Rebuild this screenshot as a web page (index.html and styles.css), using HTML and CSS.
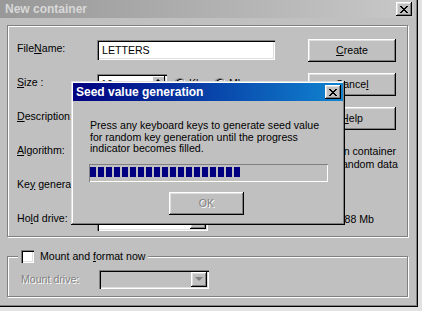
FILE: index.html
```html
<!DOCTYPE html>
<html>
<head>
    <meta charset="UTF-8">
    <title>New container</title>
    <link rel="stylesheet" href="styles.css">
</head>
<body>
    <div class="window">
        <div class="titlebar inactive">
            <span class="title">New container</span>
            <span class="close">
                <svg width="8" height="7" viewBox="0 0 8 7" shape-rendering="crispEdges"><path d="M0 0h2v1H0zM6 0h2v1H6zM1 1h2v1H1zM5 1h2v1H5zM2 2h4v1H2zM3 3h2v1H3zM2 4h4v1H2zM1 5h2v1H1zM5 5h2v1H5zM0 6h2v1H0zM6 6h2v1H6z"/></svg>
            </span>
        </div>

        <div class="client">
            <fieldset class="group main">
                <div class="row">
                    <span class="lbl">File<u>N</u>ame:</span>
                    <span class="field name">LETTERS</span>
                    <span class="btn"><u>C</u>reate</span>
                </div>
                <div class="row">
                    <span class="lbl"><u>S</u>ize :</span>
                    <span class="field spin">10
                        <span class="arrows"><i class="up"></i><i class="down"></i></span>
                    </span>
                    <span class="radio"></span><span class="opt"><u>K</u>b</span>
                    <span class="radio on"></span><span class="opt"><u>M</u>b</span>
                    <span class="btn">Cance<u>l</u></span>
                </div>
                <div class="row">
                    <span class="lbl"><u>D</u>escription:</span>
                    <span class="field desc"></span>
                    <span class="btn"><u>H</u>elp</span>
                </div>
                <div class="row">
                    <span class="lbl"><u>A</u>lgorithm:</span>
                    <span class="field combo algo"><span class="drop"><i></i></span></span>
                    <span class="note">Create hidden container<br>and fill with random data</span>
                </div>
                <div class="row">
                    <span class="lbl">Ke<u>y</u> generator:</span>
                    <span class="field combo algo"><span class="drop"><i></i></span></span>
                </div>
                <div class="row">
                    <span class="lbl">Ho<u>l</u>d drive:</span>
                    <span class="field combo hold"><span class="drop"><i></i></span></span>
                    <span class="free">Free space: 1388 Mb</span>
                </div>
            </fieldset>

            <fieldset class="group mount">
                <legend><span class="check"></span><span>Mount and <u>f</u>ormat now</span></legend>
                <div class="row short">
                    <span class="lbl disabled">Mount drive:</span>
                    <span class="field combo off"><span class="drop"><i></i></span></span>
                </div>
            </fieldset>
        </div>

        <div class="seed">
            <div class="titlebar active">
                <span class="title">Seed value generation</span>
                <span class="close">
                    <svg width="8" height="7" viewBox="0 0 8 7" shape-rendering="crispEdges"><path d="M0 0h2v1H0zM6 0h2v1H6zM1 1h2v1H1zM5 1h2v1H5zM2 2h4v1H2zM3 3h2v1H3zM2 4h4v1H2zM1 5h2v1H1zM5 5h2v1H5zM0 6h2v1H0zM6 6h2v1H6z"/></svg>
                </span>
            </div>
            <div class="seed-body">
                <p class="msg">Press any keyboard keys to generate seed value for random key generation until the progress indicator becomes filled.</p>
                <div class="progress"><div class="fill" style="width: 151px"></div></div>
                <span class="btn ok disabled">OK</span>
            </div>
        </div>
    </div>
</body>
</html>
```

FILE: styles.css
```css
* {
    box-sizing: border-box;
}
body {
    margin: 0;
    background: #e2e2e2;
    font-family: "Liberation Sans", Arial, sans-serif;
    font-size: 10.6px;
    color: #000;
}
u {
    text-decoration-thickness: 1px;
    text-underline-offset: 1px;
}
.window {
    position: relative;
    width: 418px;
    height: 307px;
    padding-right: 4px;
    background: #c0c0c0;
    box-shadow: inset -1px -1px #000, inset -2px -2px #808080;
}

/* title bars */
.titlebar {
    display: flex;
    align-items: center;
    justify-content: space-between;
    height: 18px;
    padding: 0 2px 0 5px;
    font-size: 12px;
    font-weight: bold;
}
.titlebar.inactive {
    background: linear-gradient(to right, #989898, #c8c8c8);
    color: #d8d8d8;
}
.titlebar.active {
    background: linear-gradient(to right, #000080, #1084d0);
    color: #fff;
    padding-left: 3px;
}
.close {
    display: flex;
    align-items: center;
    justify-content: center;
    width: 16px;
    height: 14px;
    background: #c0c0c0;
    box-shadow: inset -1px -1px #000, inset 1px 1px #fff, inset -2px -2px #808080, inset 2px 2px #dfdfdf;
}

.client {
    padding: 7px 0 0 7px;
}

/* group boxes */
.group {
    margin: 0;
    width: 401px;
    border: 1px solid #808080;
    box-shadow: 1px 1px #fff, inset 1px 1px #fff;
}
.main {
    height: 212px;
    padding: 7px 11px 0 9px;
}
.mount {
    margin-top: 12px;
    height: 48px;
    padding: 6px 11px 0 13px;
}
.mount legend {
    display: flex;
    align-items: center;
    height: 14px;
    margin-left: -3px;
    padding: 0 3px;
    background: #c0c0c0;
}

.row {
    display: flex;
    align-items: center;
    height: 34px;
}
.row.short {
    height: 20px;
}
.lbl {
    width: 80px;
    flex: none;
    padding-bottom: 5px;
    white-space: nowrap;
    overflow: hidden;
}
.mount .lbl {
    width: 78px;
    padding-bottom: 0;
}
.disabled {
    color: #808080;
    text-shadow: 1px 1px #fff;
}

/* sunken fields */
.field {
    position: relative;
    display: flex;
    align-items: center;
    height: 20px;
    padding-left: 5px;
    background: #fff;
    box-shadow: inset 1px 1px #808080, inset 2px 2px #000, inset -1px -1px #fff, inset -2px -2px #dfdfdf;
}
.name {
    width: 178px;
}
.desc {
    width: 178px;
}
.spin {
    width: 70px;
    padding-left: 4px;
}
.arrows {
    position: absolute;
    right: 2px;
    top: 2px;
    bottom: 2px;
    width: 13px;
    display: flex;
    flex-direction: column;
}
.arrows i {
    flex: 1;
    position: relative;
    background: #c0c0c0;
    box-shadow: inset -1px -1px #000, inset 1px 1px #fff;
}
.arrows .up::after {
    content: "";
    position: absolute;
    left: 4px;
    top: 3px;
    border: 2px solid transparent;
    border-bottom: 2px solid #000;
    border-top: 0;
}
.arrows .down::after {
    content: "";
    position: absolute;
    left: 4px;
    top: 3px;
    border: 2px solid transparent;
    border-top: 2px solid #000;
    border-bottom: 0;
}
.combo {
    height: 21px;
}
.algo {
    width: 150px;
}
.hold {
    width: 111px;
}
.combo.off {
    width: 110px;
    height: 19px;
    background: #c0c0c0;
}
.drop {
    position: absolute;
    right: 2px;
    top: 2px;
    bottom: 2px;
    width: 16px;
    display: flex;
    align-items: center;
    justify-content: center;
    background: #c0c0c0;
    box-shadow: inset -1px -1px #000, inset 1px 1px #fff, inset -2px -2px #808080, inset 2px 2px #dfdfdf;
}
.drop i {
    border-left: 4px solid transparent;
    border-right: 4px solid transparent;
    border-top: 4px solid #000;
}
.off .drop i {
    border-top-color: #808080;
}

/* radios and checkbox */
.radio {
    position: relative;
    flex: none;
    width: 12px;
    height: 12px;
    margin-left: 7px;
    border-radius: 50%;
    background: #fff;
    border: 1px solid;
    border-color: #808080 #fff #fff #808080;
    box-shadow: inset 1px 1px #000;
}
.radio + .opt + .radio {
    margin-left: 12px;
}
.radio.on::after {
    content: "";
    position: absolute;
    left: 3px;
    top: 3px;
    width: 4px;
    height: 4px;
    border-radius: 50%;
    background: #000;
}
.opt {
    margin-left: 3px;
    padding-bottom: 2px;
}
.check {
    flex: none;
    width: 13px;
    height: 13px;
    margin-right: 6px;
    background: #fff;
    box-shadow: inset 1px 1px #808080, inset 2px 2px #000, inset -1px -1px #fff, inset -2px -2px #dfdfdf;
}

/* raised buttons */
.btn {
    display: flex;
    align-items: center;
    justify-content: center;
    flex: none;
    width: 88px;
    height: 23px;
    margin-left: auto;
    background: #c0c0c0;
    box-shadow: inset -1px -1px #000, inset 1px 1px #fff, inset -2px -2px #808080, inset 2px 2px #dfdfdf;
}

.note {
    width: 118px;
    margin: 12px -5px 0 auto;
    line-height: 13px;
    white-space: nowrap;
}
.free {
    margin: 0 22px 0 auto;
    padding-bottom: 2px;
    white-space: nowrap;
}

/* seed value dialog */
.seed {
    position: absolute;
    left: 71px;
    top: 81px;
    width: 274px;
    height: 144px;
    padding: 2px;
    background: #c0c0c0;
    box-shadow: inset -1px -1px #000, inset 1px 1px #dfdfdf, inset -2px -2px #808080, inset 2px 2px #fff;
}
.seed-body {
    padding: 19px 0 0 16px;
}
.msg {
    width: 240px;
    margin: 0 0 9px 1px;
    line-height: 11.5px;
}
.progress {
    width: 239px;
    height: 18px;
    padding: 3px 1px;
    box-shadow: inset 1px 1px #808080, inset -1px -1px #fff;
}
.fill {
    height: 10px;
    background: repeating-linear-gradient(to right, #000080 0 6px, transparent 6px 8px);
}
.btn.ok {
    width: 75px;
    margin: 10px 0 0 80px;
}
```
